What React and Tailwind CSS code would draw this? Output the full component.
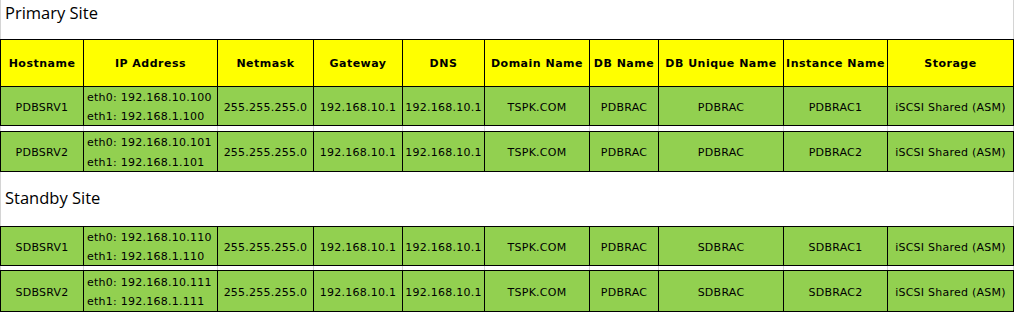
import React from "react";

const headers = [
  "Hostname",
  "IP Address",
  "Netmask",
  "Gateway",
  "DNS",
  "Domain Name",
  "DB Name",
  "DB Unique Name",
  "Instance Name",
  "Storage",
];

const primaryRows = [
  {
    host: "PDBSRV1",
    eth0: "192.168.10.100",
    eth1: "192.168.1.100",
    unique: "PDBRAC",
    instance: "PDBRAC1",
    h: "h-[39px]",
  },
  {
    host: "PDBSRV2",
    eth0: "192.168.10.101",
    eth1: "192.168.1.101",
    unique: "PDBRAC",
    instance: "PDBRAC2",
    h: "h-[40px]",
  },
];

const standbyRows = [
  {
    host: "SDBSRV1",
    eth0: "192.168.10.110",
    eth1: "192.168.1.110",
    unique: "SDBRAC",
    instance: "SDBRAC1",
    h: "h-[39px]",
  },
  {
    host: "SDBSRV2",
    eth0: "192.168.10.111",
    eth1: "192.168.1.111",
    unique: "SDBRAC",
    instance: "SDBRAC2",
    h: "h-[41px]",
  },
];

const gridCols =
  "grid grid-cols-[83px_134px_96px_89px_82px_105px_69px_125px_104px_126px]";

const cellFont = { fontFamily: '"DejaVu Sans", Verdana, sans-serif' };

const Title = ({ text, height, pad }) => (
  <div
    className={`${height} ${pad} pl-[4px] border-l border-r border-[#d4d4d4] text-[16.5px] leading-[22px] text-black`}
    style={{ fontFamily: '"Open Sans", sans-serif' }}
  >
    {text}
  </div>
);

// empty excel row between the green rows, only faint gridlines
const GapRow = ({ height }) => (
  <div className={`${gridCols} ${height} border-l border-[#d4d4d4]`}>
    {headers.map((h) => (
      <div key={h} className="border-r border-[#d4d4d4]" />
    ))}
  </div>
);

const HeaderRow = () => (
  <div className={`${gridCols} border-l border-t border-black bg-[#ffff00]`}>
    {headers.map((h) => (
      <div
        key={h}
        className="h-[47px] pt-[2px] border-r border-b border-black flex items-center justify-center font-bold text-[11px] tracking-[0.5px] whitespace-nowrap overflow-hidden"
        style={cellFont}
      >
        {h}
      </div>
    ))}
  </div>
);

const DataRow = ({ row, top }) => {
  const cell = `${row.h} border-r border-b border-black flex items-center justify-center whitespace-nowrap overflow-hidden`;
  const values = [
    "255.255.255.0",
    "192.168.10.1",
    "192.168.10.1",
    "TSPK.COM",
    "PDBRAC",
    row.unique,
    row.instance,
    "iSCSI Shared (ASM)",
  ];
  return (
    <div
      className={`${gridCols} border-l border-black bg-[#92d050] text-[11px] tracking-[0.25px] text-black ${
        top ? "border-t" : ""
      }`}
      style={cellFont}
    >
      <div className={`${cell} pt-[4px]`}>{row.host}</div>
      <div
        className={`${row.h} border-r border-b border-black flex flex-col justify-center pt-[2px] pl-[3px] leading-[19.5px] whitespace-nowrap overflow-hidden`}
      >
        <span>eth0: {row.eth0}</span>
        <span>eth1: {row.eth1}</span>
      </div>
      {values.map((v, i) => (
        <div key={i} className={`${cell} pt-[4px]`}>
          {v}
        </div>
      ))}
    </div>
  );
};

export default function App() {
  return (
    <div className="w-[1014px] h-[312px] bg-white overflow-hidden">
      <Title text="Primary Site" height="h-[39px]" pad="pt-[2px]" />
      <HeaderRow />
      <DataRow row={primaryRows[0]} />
      <GapRow height="h-[5px]" />
      <DataRow row={primaryRows[1]} top />
      <Title text="Standby Site" height="h-[54px]" pad="pt-[15px]" />
      <DataRow row={standbyRows[0]} top />
      <GapRow height="h-[4px]" />
      <DataRow row={standbyRows[1]} top />
    </div>
  );
}
